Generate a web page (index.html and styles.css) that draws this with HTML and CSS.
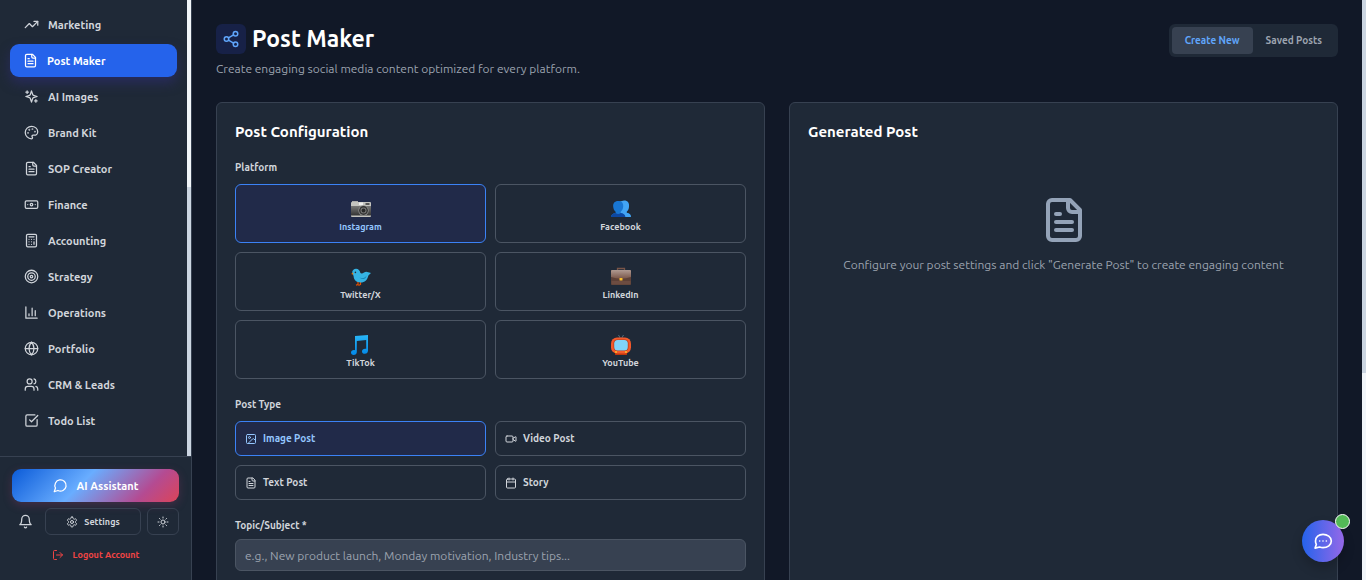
FILE: index.html
```html
<!DOCTYPE html>
<html lang="en">
<head>
<meta charset="utf-8">
<meta name="viewport" content="width=device-width, initial-scale=1">
<title>Post Maker</title>
<link rel="stylesheet" href="styles.css">
</head>
<body>
<svg class="sprite" aria-hidden="true">
  <symbol id="file-text" viewBox="0 0 24 24"><path d="M15 2H6a2 2 0 0 0-2 2v16a2 2 0 0 0 2 2h12a2 2 0 0 0 2-2V7Z"/><path d="M14 2v4a2 2 0 0 0 2 2h4"/><path d="M10 9H8"/><path d="M16 13H8"/><path d="M16 17H8"/></symbol>
</svg>
<div class="app">
  <aside class="sidebar">
    <div class="nav-area">
      <nav class="nav">
        <a class="nav-item" href="#"><svg class="icon" viewBox="0 0 24 24"><path d="m22 7-8.500 8.500-5-5L2 17"/><path d="M16 7h6v6"/></svg>Marketing</a>
        <a class="nav-item active" href="#" aria-current="page"><svg class="icon"><use href="#file-text"/></svg>Post Maker</a>
        <a class="nav-item" href="#"><svg class="icon" viewBox="0 0 24 24"><path d="m12 3-1.900 5.800a2 2 0 0 1-1.300 1.300L3 12l5.800 1.900a2 2 0 0 1 1.300 1.300L12 21l1.900-5.800a2 2 0 0 1 1.300-1.300L21 12l-5.800-1.900a2 2 0 0 1-1.300-1.300Z"/><path d="M5 3v4M3 5h4M19 17v4M17 19h4"/></svg>AI Images</a>
        <a class="nav-item" href="#"><svg class="icon" viewBox="0 0 24 24"><circle cx="13.500" cy="6.500" r=".5"/><circle cx="17.500" cy="10.500" r=".5"/><circle cx="8.500" cy="7.500" r=".5"/><circle cx="6.500" cy="12.500" r=".5"/><path d="M12 2C6.500 2 2 6.500 2 12s4.500 10 10 10c.926 0 1.648-.746 1.648-1.688 0-.437-.18-.835-.437-1.125-.29-.289-.438-.652-.438-1.125a1.640 1.640 0 0 1 1.668-1.668h1.996c3.051 0 5.555-2.503 5.555-5.554C21.965 6.012 17.461 2 12 2z"/></svg>Brand Kit</a>
        <a class="nav-item" href="#"><svg class="icon"><use href="#file-text"/></svg>SOP Creator</a>
        <a class="nav-item" href="#"><svg class="icon" viewBox="0 0 24 24"><rect x="2" y="6" width="20" height="12" rx="2"/><circle cx="12" cy="12" r="2"/><path d="M6 12h.01M18 12h.01"/></svg>Finance</a>
        <a class="nav-item" href="#"><svg class="icon" viewBox="0 0 24 24"><rect x="4" y="2" width="16" height="20" rx="2"/><path d="M8 6h8M16 14v4M16 10h.01M12 10h.01M8 10h.01M12 14h.01M8 14h.01M12 18h.01M8 18h.01"/></svg>Accounting</a>
        <a class="nav-item" href="#"><svg class="icon" viewBox="0 0 24 24"><circle cx="12" cy="12" r="10"/><circle cx="12" cy="12" r="6"/><circle cx="12" cy="12" r="2"/></svg>Strategy</a>
        <a class="nav-item" href="#"><svg class="icon" viewBox="0 0 24 24"><path d="M3 3v18h18M18 17V9M13 17V5M8 17v-3"/></svg>Operations</a>
        <a class="nav-item" href="#"><svg class="icon" viewBox="0 0 24 24"><circle cx="12" cy="12" r="10"/><path d="M12 2a14.500 14.500 0 0 0 0 20 14.500 14.500 0 0 0 0-20M2 12h20"/></svg>Portfolio</a>
        <a class="nav-item" href="#"><svg class="icon" viewBox="0 0 24 24"><path d="M16 21v-2a4 4 0 0 0-4-4H6a4 4 0 0 0-4 4v2"/><circle cx="9" cy="7" r="4"/><path d="M22 21v-2a4 4 0 0 0-3-3.870M16 3.130a4 4 0 0 1 0 7.750"/></svg>CRM &amp; Leads</a>
        <a class="nav-item" href="#"><svg class="icon" viewBox="0 0 24 24"><path d="M21 10.500V19a2 2 0 0 1-2 2H5a2 2 0 0 1-2-2V5a2 2 0 0 1 2-2h12.500"/><path d="m9 11 3 3L22 4"/></svg>Todo List</a>
      </nav>
      <div class="scrollbar nav-scrollbar"><div class="thumb"></div></div>
    </div>
    <div class="sidebar-footer">
      <button class="assistant" type="button"><svg class="icon" viewBox="0 0 24 24"><path d="M7.900 20A9 9 0 1 0 4 16.100L2 22Z"/></svg>AI Assistant</button>
      <div class="tools">
        <button class="bell" type="button" aria-label="Notifications"><svg class="icon" viewBox="0 0 24 24"><path d="M6 8a6 6 0 0 1 12 0c0 7 3 9 3 9H3s3-2 3-9M10.300 21a1.940 1.940 0 0 0 3.400 0"/></svg></button>
        <button class="outline settings" type="button"><svg class="icon" viewBox="0 0 24 24"><path d="M12.220 2h-.44a2 2 0 0 0-2 2v.18a2 2 0 0 1-1 1.730l-.43.25a2 2 0 0 1-2 0l-.15-.08a2 2 0 0 0-2.730.73l-.22.38a2 2 0 0 0 .73 2.730l.15.1a2 2 0 0 1 1 1.720v.51a2 2 0 0 1-1 1.740l-.15.09a2 2 0 0 0-.73 2.730l.22.38a2 2 0 0 0 2.730.73l.15-.08a2 2 0 0 1 2 0l.43.25a2 2 0 0 1 1 1.730V20a2 2 0 0 0 2 2h.44a2 2 0 0 0 2-2v-.18a2 2 0 0 1 1-1.730l.43-.25a2 2 0 0 1 2 0l.15.08a2 2 0 0 0 2.730-.73l.22-.39a2 2 0 0 0-.73-2.730l-.15-.08a2 2 0 0 1-1-1.740v-.5a2 2 0 0 1 1-1.740l.15-.09a2 2 0 0 0 .73-2.730l-.22-.38a2 2 0 0 0-2.730-.73l-.15.08a2 2 0 0 1-2 0l-.43-.25a2 2 0 0 1-1-1.730V4a2 2 0 0 0-2-2z"/><circle cx="12" cy="12" r="3"/></svg>Settings</button>
        <button class="outline theme" type="button" aria-label="Toggle theme"><svg class="icon" viewBox="0 0 24 24"><circle cx="12" cy="12" r="4"/><path d="M12 2v2M12 20v2M4.930 4.930l1.410 1.410M17.660 17.660l1.410 1.410M2 12h2M20 12h2M6.340 17.660l-1.410 1.410M19.070 4.930l-1.410 1.410"/></svg></button>
      </div>
      <button class="logout" type="button"><svg class="icon" viewBox="0 0 24 24"><path d="M9 21H5a2 2 0 0 1-2-2V5a2 2 0 0 1 2-2h4M16 17l5-5-5-5M21 12H9"/></svg>Logout Account</button>
    </div>
  </aside>

  <main class="main">
    <header class="page-header">
      <div>
        <div class="title-row">
          <span class="title-icon"><svg class="icon" viewBox="0 0 24 24"><circle cx="18" cy="5" r="3"/><circle cx="6" cy="12" r="3"/><circle cx="18" cy="19" r="3"/><path d="m8.590 13.510 6.830 3.980M15.410 6.510l-6.820 3.980"/></svg></span>
          <h1>Post Maker</h1>
        </div>
        <p class="subtitle">Create engaging social media content optimized for every platform.</p>
      </div>
      <div class="tabs">
        <button class="tab selected" type="button">Create New</button>
        <button class="tab" type="button">Saved Posts</button>
      </div>
    </header>

    <div class="columns">
      <section class="card">
        <h2>Post Configuration</h2>
        <h3 class="label" id="platform-label">Platform</h3>
        <div class="options" role="group" aria-labelledby="platform-label">
          <button class="option platform selected" type="button">
            <svg class="emoji" viewBox="0 0 20 20"><defs><linearGradient id="cam" x2="0" y2="1"><stop stop-color="#777"/><stop offset="1" stop-color="#333"/></linearGradient></defs><path fill="#aaa" d="M1 2h6v2H1z"/><rect y="3" width="20" height="15" rx="1" fill="#c4c4c0"/><path fill="url(#cam)" d="M0 7h20v9.500H0z"/><path fill="#555" d="M14.500 4h4v2h-4z"/><path fill="#eee" d="M8 3.500h4V6H8z"/><circle cx="12.500" cy="11.500" r="5.200" fill="#888"/><circle cx="12.500" cy="11.500" r="4.400" fill="#333"/><circle cx="12.500" cy="11.500" r="3" fill="#777"/><circle cx="12.500" cy="11.500" r="1.900" fill="#292929"/></svg>
            Instagram</button>
          <button class="option platform" type="button">
            <svg class="emoji" viewBox="0 0 20 20"><path fill="#42a5f5" d="M13 1.500c4 0 5.500 2.500 5 6.500-.2 2-1 3.500-2.200 4.500v1.300c3 .7 4.200 1.700 4.200 4.200H9V2.500z"/><path fill="#1976d2" d="M7.300 2c3.700 0 5.200 2.200 4.900 5.800-.2 2.200-1.200 4-2.500 5v1.100c3 .6 4.600 1.800 4.600 4.100H0c0-2.300 1.500-3.500 4.600-4.100v-1.100c-1.300-1-2.200-2.800-2.400-5C1.900 4.200 3.500 2 7.300 2z"/><path fill="#0d47a1" d="M4.600 13.900c1.500 1.300 3.600 1.300 5.100 0 3 .6 4.600 1.800 4.600 4.100H0c0-2.300 1.500-3.500 4.600-4.100z"/></svg>
            Facebook</button>
          <button class="option platform" type="button">
            <svg class="emoji" viewBox="0 0 20 20"><path d="M7 14.500v3l-2 .6M9.500 15v2.500l-2 1" fill="none" stroke="#e65100" stroke-width="1.200"/><path fill="#35b4e4" d="M1.200 5.200C1.500 3 3 1.800 5 1.800c2.400 0 4 1.700 4.300 4 .8 1 2.300.7 3.700-.3 1.500-1 2.800-1 4.200-.2l2.800.6-2.600 2.500c-1 4.500-3.700 7-7.600 7-4.500 0-7-2.600-7.200-6.200z"/><path fill="#1685b7" d="M8.500 10.500c3 1.500 5.500.5 7-2-.5 3.500-3.500 5-7 2z"/><path fill="#f57c00" d="M2 5.500.2 7l2.100.7z"/><circle cx="4.400" cy="5.400" r=".8" fill="#263238"/></svg>
            Twitter/X</button>
          <button class="option platform" type="button">
            <svg class="emoji" viewBox="0 0 20 20"><defs><linearGradient id="case" x2="0" y2="1"><stop stop-color="#b09a92"/><stop offset="1" stop-color="#795548"/></linearGradient></defs><path fill="none" stroke="#795548" stroke-width="1.300" d="M6.500 4V1.500h7V4"/><rect y="3" width="20" height="15" rx="1" fill="#5d4037"/><path fill="#6d4c41" d="M.5 14h19v3.500H.5z"/><path fill="url(#case)" d="M0 4q0-1 1-1h18q1 0 1 1v6q-10 3.500-20 0z"/><rect x="8.500" y="11" width="3" height="2.500" rx=".6" fill="#fbc02d"/></svg>
            LinkedIn</button>
          <button class="option platform" type="button">
            <svg class="emoji" viewBox="0 0 20 20"><defs><linearGradient id="note" x2="0" y2="1"><stop stop-color="#29b6f6"/><stop offset="1" stop-color="#0288e8"/></linearGradient></defs><path fill="url(#note)" d="M4 1 17 0v15.500c0 2-1.300 3.300-3.200 3.300-1.700 0-2.800-1-2.800-2.400 0-2 2-3.100 4.200-2.600V5L5.800 6v11c0 2-1.400 3-3.100 3-1.700 0-2.700-1-2.700-2.400 0-2 1.900-2.900 4-2.400z"/></svg>
            TikTok</button>
          <button class="option platform" type="button">
            <svg class="emoji" viewBox="0 0 20 20"><path d="M9.500 3.500 7.500 0M10.500 3.500l2-3.500" stroke="#546e7a" fill="none"/><path fill="#bf360c" d="M3.500 16h13l-.7 4H4.200z"/><rect y="2.500" width="20" height="16" rx="6" fill="#f4592b"/><rect x="2.500" y="4.500" width="15" height="11.500" rx="4" fill="#b33c17"/><rect x="3.200" y="5" width="13.600" height="10.500" rx="3.500" fill="#81d4fa"/><circle cx="5" cy="17" r=".9" fill="#ffca28"/><circle cx="15" cy="17" r=".9" fill="#ffca28"/></svg>
            YouTube</button>
        </div>

        <h3 class="label" id="type-label">Post Type</h3>
        <div class="options" role="group" aria-labelledby="type-label">
          <button class="option type selected" type="button"><svg class="icon" viewBox="0 0 24 24"><rect x="3" y="3" width="18" height="18" rx="2"/><circle cx="9" cy="9" r="2"/><path d="m21 15-3.100-3.100a2 2 0 0 0-2.800 0L6 21"/></svg>Image Post</button>
          <button class="option type" type="button"><svg class="icon" viewBox="0 0 24 24"><path d="m16 13 5.200 3.500a.5.5 0 0 0 .8-.4V7.900a.5.5 0 0 0-.8-.4L16 10.500"/><rect x="2" y="6" width="14" height="12" rx="2"/></svg>Video Post</button>
          <button class="option type" type="button"><svg class="icon"><use href="#file-text"/></svg>Text Post</button>
          <button class="option type" type="button"><svg class="icon" viewBox="0 0 24 24"><path d="M8 2v4M16 2v4M3 10h18"/><rect x="3" y="4" width="18" height="18" rx="2"/></svg>Story</button>
        </div>

        <label class="label topic-label" for="topic">Topic/Subject *</label>
        <input class="field" id="topic" type="text" placeholder="e.g., New product launch, Monday motivation, Industry tips...">
      </section>

      <section class="card">
        <h2>Generated Post</h2>
        <div class="empty">
          <svg class="icon" viewBox="0 0 24 24"><use href="#file-text"/></svg>
          <p>Configure your post settings and click "Generate Post" to create engaging content</p>
        </div>
      </section>
    </div>
  </main>
  <div class="scrollbar page-scrollbar"><div class="thumb"></div></div>
</div>

<button class="chat" type="button" aria-label="Open chat"><svg class="icon" viewBox="0 0 24 24"><path d="M4 16.100C3.300 15 3 13.500 3 12c0-4.700 4-8 9-8s10 3.300 10 8-4.500 8-10 8c-1.500 0-2.900-.3-4.100-.8L2.500 20.500z"/><path d="M8 12h.01M12 12h.01M16 12h.01"/></svg><span class="status"></span></button>
</body>
</html>
```
FILE: styles.css
```css
* { box-sizing: border-box; }

body {
  margin: 0;
  background: #111827;
  color: #d1d5db;
  font-family: Ubuntu, "Noto Sans", sans-serif;
  font-size: 12px;
  line-height: 18px;
}

h1, h2, h3, p { margin: 0; }

button, input {
  font: inherit;
  color: inherit;
}

button {
  display: flex;
  align-items: center;
  justify-content: center;
  padding: 0;
  border: 0;
  background: none;
  cursor: pointer;
}

.sprite { display: none; }

.icon {
  flex: none;
  width: 15px;
  height: 15px;
  fill: none;
  stroke: currentColor;
  stroke-width: 2;
  stroke-linecap: round;
  stroke-linejoin: round;
}

.app {
  display: flex;
  height: 100vh;
  overflow: hidden;
}

/* Scrollbars */
.scrollbar {
  flex: none;
  width: 4px;
  background: #f1f5f9;
}

.thumb { background: #cbd5e1; }

.page-scrollbar .thumb { height: 64.300%; }

.nav-scrollbar {
  display: flex;
  align-items: flex-end;
}

.nav-scrollbar .thumb {
  width: 100%;
  height: 59%;
}

/* Sidebar */
.sidebar {
  display: flex;
  flex: none;
  flex-direction: column;
  width: 192px;
  border-right: 1px solid #374151;
  background: #1f2937;
}

.nav-area {
  display: flex;
  flex: 1;
  min-height: 0;
  overflow: hidden;
}

.nav {
  display: flex;
  flex: 1;
  flex-direction: column;
  gap: 3px;
  padding: 8px 12px;
}

.nav-item {
  display: flex;
  flex: none;
  align-items: center;
  gap: 9px;
  height: 33px;
  padding: 0 12px;
  border-radius: 9px;
  color: #d1d5db;
  font-size: 11px;
  font-weight: 600;
  text-decoration: none;
}

.nav-item.active {
  margin: 0 -2px;
  padding: 0 13px;
  background: #2563eb;
  box-shadow: 0 6px 12px rgba(49, 46, 129, .5);
  color: #fff;
}

.sidebar-footer {
  display: flex;
  flex-direction: column;
  gap: 6px;
  padding: 12px;
  border-top: 1px solid #374151;
}

.assistant {
  gap: 9px;
  height: 33px;
  border-radius: 9px;
  background: linear-gradient(135deg, #0b5bd8 0%, #69adff 42%, #b44b92 78%, #dc4458 100%);
  box-shadow: 0 3px 10px rgba(180, 60, 120, .25);
  color: #fff;
  font-size: 11px;
  font-weight: 700;
}

.tools {
  display: flex;
  gap: 6px;
}

.bell { width: 27px; }

.outline {
  gap: 6px;
  height: 27px;
  border: 1px solid #374151;
  border-radius: 6px;
  font-size: 9px;
  font-weight: 600;
}

.outline .icon, .logout .icon, .type .icon {
  width: 12px;
  height: 12px;
}

.settings { flex: 1; }

.theme { width: 32px; }

.logout {
  gap: 9px;
  height: 27px;
  color: #ef4444;
  font-size: 9px;
  font-weight: 600;
}

/* Page */
.main {
  flex: 1;
  min-width: 0;
  padding: 24px;
}

.page-header {
  display: flex;
  align-items: flex-start;
  justify-content: space-between;
  margin-bottom: 24px;
}

.title-row {
  display: flex;
  align-items: center;
  gap: 6px;
  margin-bottom: 6px;
}

.title-icon {
  display: flex;
  align-items: center;
  justify-content: center;
  width: 30px;
  height: 30px;
  border-radius: 6px;
  background: #172147;
  color: #60a5fa;
}

.title-icon .icon {
  width: 18px;
  height: 18px;
}

h1 {
  color: #fff;
  font-size: 23px;
  font-weight: 700;
  line-height: 30px;
}

.subtitle { color: #9ca3af; }

.tabs {
  display: flex;
  padding: 3px;
  border-radius: 6px;
  background: #1f2937;
}

.tab {
  height: 27px;
  padding: 0 13px;
  border-radius: 4px;
  color: #9ca3af;
  font-size: 10px;
  font-weight: 600;
}

.tab.selected {
  background: #374151;
  color: #60a5fa;
}

.columns {
  display: grid;
  grid-template-columns: 1fr 1fr;
  gap: 24px;
  min-height: 100vh;
}

.card {
  padding: 18px;
  border: 1px solid #374151;
  border-radius: 6px;
  background: #1f2937;
}

h2 {
  margin-bottom: 18px;
  color: #fff;
  font-size: 15px;
  font-weight: 700;
  line-height: 21px;
}

.label {
  display: block;
  margin-bottom: 9px;
  font-size: 10px;
  font-weight: 600;
  line-height: 15px;
}

.topic-label { margin-bottom: 6px; }

.options {
  display: grid;
  grid-template-columns: 1fr 1fr;
  gap: 9px;
  margin-bottom: 18px;
}

.option {
  border: 1px solid #4b5563;
  border-radius: 6px;
  font-weight: 600;
}

.option.selected {
  border-color: #3b82f6;
  background: #212a49;
  color: #93c5fd;
}

.platform {
  flex-direction: column;
  gap: 2px;
  height: 59px;
  padding-top: 5px;
  font-size: 9px;
  line-height: 12px;
}

.emoji {
  width: 20px;
  height: 20px;
}

.type {
  justify-content: flex-start;
  gap: 6px;
  height: 35px;
  padding: 0 9px;
  font-size: 10px;
}

.field {
  display: block;
  width: 100%;
  height: 32px;
  padding: 0 9px;
  border: 1px solid #4b5563;
  border-radius: 6px;
  background: #374151;
}

.field::placeholder {
  color: #9ca3af;
  opacity: 1;
}

.empty {
  display: flex;
  flex-direction: column;
  align-items: center;
  gap: 12px;
  padding-top: 36px;
  color: #9ca3af;
  text-align: center;
}

.empty .icon {
  width: 48px;
  height: 48px;
  color: #94a3b8;
}

/* Chat launcher floating over the page */
.chat {
  position: fixed;
  right: 22px;
  bottom: 18px;
  width: 42px;
  height: 42px;
  border-radius: 50%;
  background: linear-gradient(90deg, #2563eb, #9568e8);
  box-shadow: 0 6px 12px rgba(0, 0, 0, .2);
  color: #fff;
}

.chat .icon {
  width: 20px;
  height: 20px;
}

.status {
  position: absolute;
  top: -6px;
  right: -6px;
  width: 15px;
  height: 15px;
  border: 1px solid #fff;
  border-radius: 50%;
  background: #53b957;
}
```
